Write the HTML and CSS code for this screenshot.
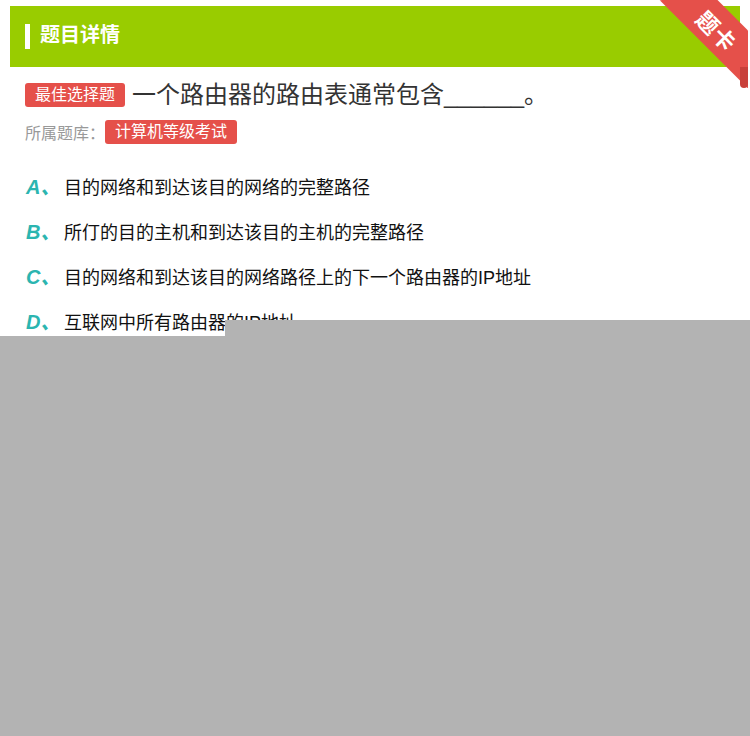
FILE: index.html
```html
<!DOCTYPE html>
<html lang="zh">
<head>
<meta charset="utf-8">
<link rel="stylesheet" href="styles.css">
</head>
<body>
<div class="page">
  <div class="card">
    <div class="head">
      <span class="head-bar"></span>
      <span class="head-title">题目详情</span>
    </div>
    <div class="qline">
      <span class="badge">最佳选择题</span>
      <span class="qtext">一个路由器的路由表通常包含______。</span>
    </div>
    <div class="bank">
      <span class="bank-label">所属题库：</span>
      <span class="badge">计算机等级考试</span>
    </div>
    <ul class="options">
      <li class="opt"><span class="letter">A、</span><span class="otext">目的网络和到达该目的网络的完整路径</span></li>
      <li class="opt"><span class="letter">B、</span><span class="otext">所仃的目的主机和到达该目的主机的完整路径</span></li>
      <li class="opt"><span class="letter">C、</span><span class="otext">目的网络和到达该目的网络路径上的下一个路由器的IP地址</span></li>
      <li class="opt"><span class="letter">D、</span><span class="otext">互联网中所有路由器的IP地址</span></li>
    </ul>
  </div>
  <div class="ribbon">
    <div class="band"><span>题卡</span></div>
  </div>
  <div class="fold"></div>
  <div class="mask-a"></div>
  <div class="mask-b"></div>
</div>
</body>
</html>
```

FILE: styles.css
```css
html, body {
  margin: 0;
  padding: 0;
  background: #ffffff;
}
body {
  font-family: "Liberation Sans", "Noto Sans CJK SC", sans-serif;
  width: 750px;
  height: 736px;
  overflow: hidden;
}
.page {
  position: relative;
  width: 750px;
  height: 736px;
  padding-top: 6px;
  box-sizing: border-box;
}
.card {
  margin: 0 10px;
}
.head {
  height: 61px;
  background: #99cc00;
  display: flex;
  align-items: center;
  padding-left: 15px;
}
.head-bar {
  width: 5px;
  height: 25px;
  background: #ffffff;
  margin-right: 10px;
}
.head-title {
  color: #ffffff;
  font-size: 20px;
  font-weight: bold;
  line-height: 24px;
  margin-top: -4px;
}
.qline {
  display: flex;
  align-items: center;
  padding-left: 15px;
  margin-top: 15px;
  height: 26px;
}
.badge {
  display: inline-block;
  background: #e5504a;
  color: #ffffff;
  font-size: 16px;
  line-height: 24px;
  height: 24px;
  padding: 0 10px;
  border-radius: 3px;
}
.qtext {
  font-size: 24px;
  color: #333333;
  margin-left: 7px;
  line-height: 26px;
}
.bank {
  display: flex;
  align-items: center;
  padding-left: 15px;
  margin-top: 12px;
  height: 24px;
}
.bank-label {
  font-size: 16px;
  color: #999999;
}
.options {
  list-style: none;
  margin: 19px 0 0 0;
  padding: 0 0 0 16px;
}
.opt {
  display: flex;
  align-items: center;
  height: 45px;
}
.letter {
  width: 38px;
  color: #2bb5b0;
  font-size: 20px;
  font-weight: bold;
  font-style: italic;
}
.otext {
  font-size: 18px;
  color: #111111;
}
.ribbon {
  position: absolute;
  top: 0;
  right: 2px;
  width: 92px;
  height: 88px;
  overflow: hidden;
  border-top-left-radius: 6px;
}
.band {
  position: absolute;
  left: -18px;
  top: 9px;
  width: 160px;
  height: 41px;
  background: #e5504a;
  transform: rotate(45deg);
  display: flex;
  align-items: center;
  justify-content: center;
}
.band span {
  color: #ffffff;
  font-size: 22px;
  font-weight: bold;
  letter-spacing: 1px;
}
.fold {
  position: absolute;
  top: 67px;
  right: 2px;
  width: 8px;
  height: 21px;
  background: #c8403a;
  border-radius: 0 0 4px 4px;
}
.mask-a {
  position: absolute;
  left: 225px;
  top: 320px;
  width: 525px;
  height: 16px;
  background: #b3b3b3;
}
.mask-b {
  position: absolute;
  left: 0;
  top: 336px;
  width: 750px;
  height: 400px;
  background: #b3b3b3;
}
```
